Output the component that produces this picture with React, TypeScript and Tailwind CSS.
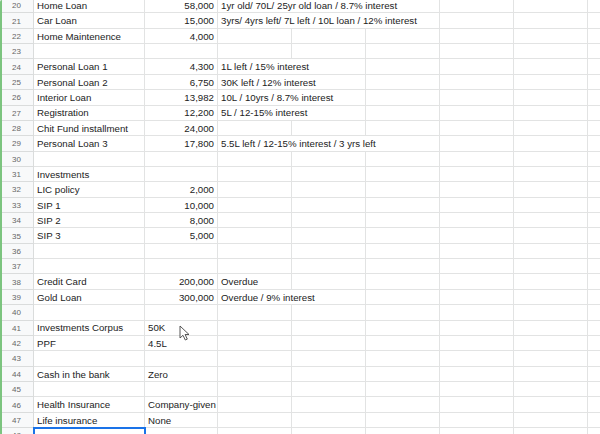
import React from "react";

interface Row {
  n: number;
  a?: string;
  b?: string;
  bLeft?: boolean;
  c?: string;
  span?: number; // how many columns the C text runs over
}

const rows: Row[] = [
  { n: 20, a: "Home Loan", b: "58,000", c: "1yr old/ 70L/ 25yr old loan / 8.7% interest", span: 3 },
  { n: 21, a: "Car Loan", b: "15,000", c: "3yrs/ 4yrs left/ 7L left / 10L loan / 12% interest", span: 3 },
  { n: 22, a: "Home Maintenence", b: "4,000" },
  { n: 23 },
  { n: 24, a: "Personal Loan 1", b: "4,300", c: "1L left / 15% interest", span: 2 },
  { n: 25, a: "Personal Loan 2", b: "6,750", c: "30K left / 12% interest", span: 2 },
  { n: 26, a: "Interior Loan", b: "13,982", c: "10L / 10yrs / 8.7% interest", span: 2 },
  { n: 27, a: "Registration", b: "12,200", c: "5L / 12-15% interest", span: 2 },
  { n: 28, a: "Chit Fund installment", b: "24,000" },
  { n: 29, a: "Personal Loan 3", b: "17,800", c: "5.5L left / 12-15% interest / 3 yrs left", span: 3 },
  { n: 30 },
  { n: 31, a: "Investments" },
  { n: 32, a: "LIC policy", b: "2,000" },
  { n: 33, a: "SIP 1", b: "10,000" },
  { n: 34, a: "SIP 2", b: "8,000" },
  { n: 35, a: "SIP 3", b: "5,000" },
  { n: 36 },
  { n: 37 },
  { n: 38, a: "Credit Card", b: "200,000", c: "Overdue", span: 1 },
  { n: 39, a: "Gold Loan", b: "300,000", c: "Overdue / 9% interest", span: 2 },
  { n: 40 },
  { n: 41, a: "Investments Corpus", b: "50K", bLeft: true },
  { n: 42, a: "PPF", b: "4.5L", bLeft: true },
  { n: 43 },
  { n: 44, a: "Cash in the bank", b: "Zero", bLeft: true },
  { n: 45 },
  { n: 46, a: "Health Insurance", b: "Company-given", bLeft: true },
  { n: 47, a: "Life insurance", b: "None", bLeft: true },
  { n: 48 },
];

const cell =
  "h-full shrink-0 border-r border-b border-[#e2e3e3] flex items-center pt-[2px] overflow-hidden whitespace-nowrap";

function SheetRow({ row }: { row: Row }) {
  const span = row.span ?? 1;
  const rest = 5 - span; // plain columns after C..G
  const selected = row.n === 48;
  return (
    <div className="flex h-[15.37px]">
      <div className="h-full w-[34px] shrink-0 border-r border-b border-[#dadcdc] bg-[#f8f9fa] flex items-center justify-center pt-[2px] text-[8px] text-[#666]">
        {row.n}
      </div>
      <div
        className={`${cell} w-[111px] px-[3px] ${
          selected ? "outline-2 outline-[#1a73e8] -outline-offset-1" : ""
        }`}
      >
        {row.a}
      </div>
      <div
        className={`${cell} w-[73px] px-[3px] ${
          row.bLeft ? "justify-start" : "justify-end"
        }`}
      >
        {row.b}
      </div>
      <div className={cell + " px-[3px]"} style={{ width: 74 * span }}>
        {row.c}
      </div>
      {Array.from({ length: rest }).map((_, i) => (
        <div key={i} className={`${cell} w-[74px]`} />
      ))}
      <div className={`${cell} w-[40px]`} />
    </div>
  );
}

export default function App() {
  return (
    <div className="relative h-[434px] w-[600px] overflow-hidden bg-white">
      <div
        className="-mt-[2px] flex flex-col text-[9.7px] text-[#222]"
        style={{ fontFamily: '"Liberation Sans", Arial, sans-serif' }}
      >
        {rows.map((r) => (
          <SheetRow key={r.n} row={r} />
        ))}
      </div>

      {/* green frame edge */}
      <div className="absolute left-0 top-0 h-full w-[2px] rounded-tl-full bg-[#7cc47f]" />

      {/* mouse pointer */}
      <svg
        className="absolute left-[179px] top-[325px]"
        width="12"
        height="16"
        viewBox="0 0 12 16"
      >
        <path
          d="M1 1 L1 13 L4 10.3 L6.3 15 L8.3 14.1 L6.1 9.5 L10 9.5 Z"
          fill="#fff"
          stroke="#444"
          strokeWidth="0.9"
          strokeLinejoin="round"
        />
      </svg>
    </div>
  );
}
